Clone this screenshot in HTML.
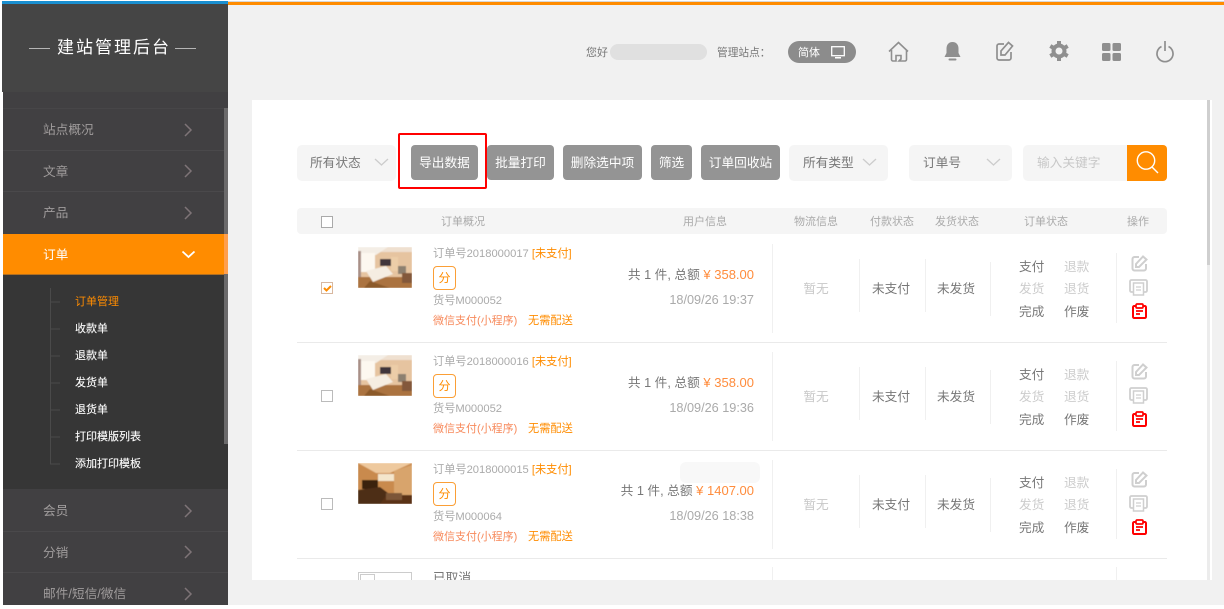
<!DOCTYPE html>
<html lang="zh-CN"><head><meta charset="utf-8"><title>订单管理</title>
<style>
*{box-sizing:border-box}
html,body{margin:0;padding:0;width:1224px;height:609px;overflow:hidden;background:#fff}
body{position:relative;font-family:"Liberation Sans","Noto Sans CJK SC",sans-serif;font-size:12.7px;color:#777}
.a{position:absolute;white-space:nowrap}
.t{position:absolute;white-space:nowrap;line-height:16px;height:16px}
.c{text-align:center}
.btn{position:absolute;top:145px;height:35px;line-height:36px;background:#949494;border-radius:4px;color:#fff;text-align:center;font-size:12.7px}
.sel{position:absolute;top:145px;height:36px;background:#f5f5f5;border-radius:5px;line-height:36px;color:#777;font-size:12.7px}
.nav{position:absolute;left:43px;color:#a09c9c;font-size:12.7px;line-height:16px;white-space:nowrap}
.sub{position:absolute;left:75px;color:#fff;font-size:11px;line-height:14px;white-space:nowrap;-webkit-text-stroke:.1px #fff}
.ln{position:absolute;left:3px;width:221px;height:1px;background:#4a494b}
.v{position:absolute;width:1px;background:#f0f0f0}
.h{position:absolute;top:214px;font-size:11px;line-height:16px;color:#aaa;white-space:nowrap}
.cb{position:absolute;left:321px;width:12px;height:12px;border:1px solid #bbb;background:#fff}
.row{position:absolute;left:0;width:1224px;height:108px}
.rl{position:absolute;left:297px;width:870px;height:1px;background:#eaeaea;top:107px}
.f{position:absolute;left:433px;top:31px;width:23px;height:24px;border:1px solid #fb9f36;border-radius:4px;color:#ff8c00;text-align:center;line-height:23px;font-size:12px}
.g{color:#aaa}.o{color:#ff8c00}
.s{font-size:11.2px}
.pay{font-size:11px;color:#f78a5c}
.pr{color:#ff8c3c;font-size:13px}
svg{position:absolute;overflow:visible}
</style></head><body>
<svg width="0" height="0" style="position:absolute"><defs>
<filter id="bl" x="0" y="0" width="100%" height="100%"><feGaussianBlur stdDeviation=".45"/></filter>
<symbol id="p1" viewBox="0 0 54 41"><g filter="url(#bl)"><rect width="54" height="41" fill="#e6c4a0"/><rect width="54" height="5" fill="#efe0d0"/><path d="M0 0h30L18 8H0z" fill="#f4eee6"/><rect x="3" y="6" width="14" height="19" fill="#fdf8f0"/><rect x="0" y="4" width="3" height="27" fill="#a88f86"/><rect y="30" width="54" height="11" fill="#ab7340"/><path d="M12 34l20 7H6z" fill="#8c5a2c"/><rect x="22" y="12" width="11" height="7" fill="#40353a"/><path d="M8 24l20-5 7 8-20 8z" fill="#f5ede2"/><path d="M33 10h7v14h-7z" fill="#eccda8"/><rect x="40" y="19" width="8" height="8" fill="#8d8070"/><rect x="44" y="26" width="10" height="10" fill="#83593a"/></g></symbol>
<symbol id="p2" viewBox="0 0 54 41"><g filter="url(#bl)"><rect width="54" height="41" fill="#c98a4e"/><path d="M0 0h54L32 10H18z" fill="#eec99e"/><rect y="30" width="54" height="11" fill="#5a3318"/><rect x="20" y="11" width="16" height="7" fill="#f4e6cc"/><rect x="4" y="17" width="16" height="9" fill="#3a2210"/><path d="M0 27l22-3 8 6-8 11H0z" fill="#4e2f18"/><path d="M36 8l18-6v30H36z" fill="#d8a46c"/><rect x="28" y="30" width="16" height="7" fill="#7c5638"/></g></symbol>
<symbol id="ed" viewBox="0 0 17 17"><path d="M8 2H3.500A2 2 0 0 0 1.500 4v9.500a2 2 0 0 0 2 2H13a2 2 0 0 0 2-2V9" fill="none" stroke="#cfcfcf" stroke-width="2"/><path d="M5 12V9l7-7.500 3.500 3L8 12z" fill="none" stroke="#cfcfcf" stroke-width="2"/></symbol>
<symbol id="pr" viewBox="0 0 19 17"><path d="M4 13H2.500a1.500 1.500 0 0 1-1.500-1.500v-9A1.500 1.500 0 0 1 2.500 1h14A1.500 1.500 0 0 1 18 2.500v9a1.500 1.500 0 0 1-1.500 1.500H15" fill="none" stroke="#cfcfcf" stroke-width="1.800"/><rect x="4.500" y="4" width="10" height="12" fill="#fff" stroke="#cfcfcf" stroke-width="1.500"/><path d="M7 8h5M7 11h5" stroke="#cfcfcf" stroke-width="1.200"/></symbol>
<symbol id="rd" viewBox="0 0 15 16"><path d="M4 3H2.200A1.200 1.200 0 0 0 1 4.200v9.600A1.200 1.200 0 0 0 2.200 15h10.600a1.200 1.200 0 0 0 1.200-1.200V4.200A1.200 1.200 0 0 0 12.800 3H11" fill="none" stroke="#f00" stroke-width="2"/><rect x="4" y="1" width="7" height="4" rx="1" fill="#fff" stroke="#f00" stroke-width="1.700"/><path d="M4 8h7M4 11h4" stroke="#f00" stroke-width="1.700"/></symbol>
</defs></svg>

<!-- page bg -->
<div class="a" style="left:3px;top:3px;width:1221px;height:602px;background:#f1f1f1"></div>
<div class="a" style="left:228px;top:1px;width:996px;height:1px;background:#d8d8d8"></div>
<div class="a" style="left:228px;top:2px;width:996px;height:3px;background:#ff8c00"></div>
<div class="a" style="left:2px;top:1px;width:226px;height:3px;background:#1a8fd0"></div>

<!-- sidebar -->
<div class="a" style="left:2px;top:4px;width:226px;height:88px;background:#454545"></div>
<div class="a" style="left:3px;top:92px;width:225px;height:513px;background:#414042"></div>
<div class="a" style="left:29px;top:48px;width:21px;height:1px;background:#b5b5b5"></div>
<div class="a" style="left:175px;top:48px;width:21px;height:1px;background:#b5b5b5"></div>
<div class="a" style="left:57px;top:38px;color:#fff;font-size:17px;line-height:20px;letter-spacing:2px">建站管理后台</div>
<div class="ln" style="top:108px;background:#474648"></div>
<div class="ln" style="top:150px"></div>
<div class="ln" style="top:191px"></div>
<div class="a" style="left:3px;top:234px;width:225px;height:40px;background:#ff8c00"></div>
<div class="a" style="left:3px;top:274px;width:225px;height:215px;background:#363636"></div>
<div class="a" style="left:3px;top:274px;width:225px;height:1px;background:#b06f22"></div>
<div class="ln" style="top:531px;width:225px"></div>
<div class="ln" style="top:572px;width:225px"></div>
<div class="a" style="left:224px;top:108px;width:4px;height:336px;background:#6b6a6b"></div>
<div class="a" style="left:224px;top:234px;width:4px;height:40px;background:#ff9f4d"></div>
<div class="nav" style="top:122px">站点概况</div>
<div class="nav" style="top:164px">文章</div>
<div class="nav" style="top:205px">产品</div>
<div class="nav" style="top:247px;color:#fff">订单</div>
<div class="nav" style="top:503px">会员</div>
<div class="nav" style="top:545px">分销</div>
<div class="nav" style="top:586px">邮件/短信/微信</div>
<svg style="left:184px;top:123px" width="8" height="14"><path d="M1 1l6 6-6 6" fill="none" stroke="#7e7477" stroke-width="1.500"/></svg>
<svg style="left:184px;top:164px" width="8" height="14"><path d="M1 1l6 6-6 6" fill="none" stroke="#7e7477" stroke-width="1.500"/></svg>
<svg style="left:184px;top:206px" width="8" height="14"><path d="M1 1l6 6-6 6" fill="none" stroke="#7e7477" stroke-width="1.500"/></svg>
<svg style="left:181px;top:250px" width="15" height="9"><path d="M1.500 1.500l6 5.500 6-5.500" fill="none" stroke="#fff" stroke-width="1.800"/></svg>
<svg style="left:184px;top:504px" width="8" height="14"><path d="M1 1l6 6-6 6" fill="none" stroke="#7e7477" stroke-width="1.500"/></svg>
<svg style="left:184px;top:545px" width="8" height="14"><path d="M1 1l6 6-6 6" fill="none" stroke="#7e7477" stroke-width="1.500"/></svg>
<svg style="left:184px;top:587px" width="8" height="14"><path d="M1 1l6 6-6 6" fill="none" stroke="#7e7477" stroke-width="1.500"/></svg>
<svg style="left:50px;top:288px" width="12" height="178"><path d="M.5 0v176M0 14h10M0 41h10M0 68h10M0 95h10M0 122h10M0 149h10M0 176h10" stroke="#4a4a4a" fill="none"/></svg>
<div class="sub o" style="top:295px;-webkit-text-stroke:0">订单管理</div>
<div class="sub" style="top:322px">收款单</div>
<div class="sub" style="top:349px">退款单</div>
<div class="sub" style="top:376px">发货单</div>
<div class="sub" style="top:403px">退货单</div>
<div class="sub" style="top:430px">打印模版列表</div>
<div class="sub" style="top:457px">添加打印模板</div>

<!-- top bar -->
<div class="a" style="left:586px;top:46px;font-size:11px;line-height:14px;color:#777">您好</div>
<div class="a" style="left:610px;top:44px;width:97px;height:16px;background:#e0e0e0;border-radius:8px"></div>
<div class="a" style="left:717px;top:46px;font-size:10.7px;line-height:14px;color:#777">管理站点：</div>
<div class="a" style="left:788px;top:41px;width:68px;height:22px;background:#8c8c8c;border-radius:11px"></div>
<div class="a" style="left:798px;top:46px;font-size:11px;line-height:14px;color:#fff">简体</div>
<svg style="left:831px;top:46px" width="14" height="13"><rect x=".7" y=".7" width="12.600" height="9" fill="none" stroke="#fff" stroke-width="1.300"/><rect x="4" y="11" width="6" height="1.500" fill="#fff"/></svg>
<svg style="left:888px;top:41px" width="21" height="21" viewBox="0 0 21 21"><path d="M1 10.500L10.500 1.500 20 10.500M3.500 9v9.500a1.500 1.500 0 0 0 1.500 1.500h3v-5.500h5v3.500l-2 2h6a1.500 1.500 0 0 0 1.500-1.500V9" fill="none" stroke="#8f8f8f" stroke-width="1.600"/></svg>
<svg style="left:942px;top:41px" width="21" height="21" viewBox="0 0 21 21"><path d="M10.500 1c-4 0-6 3-6 6.500v4.500L2.500 16h16l-2-4V7.500c0-3.500-2-6.500-6-6.500z" fill="#8f8f8f"/><path d="M7.500 18.500h6" stroke="#8f8f8f" stroke-width="2" stroke-linecap="round"/></svg>
<svg style="left:996px;top:41px" width="18" height="20" viewBox="0 0 18 20"><path d="M8 3H3a2 2 0 0 0-2 2v12a2 2 0 0 0 2 2h10a2 2 0 0 0 2-2v-6" fill="none" stroke="#8f8f8f" stroke-width="1.700"/><path d="M5 14v-4l7.500-8.500L16.500 5 9 14z" fill="none" stroke="#8f8f8f" stroke-width="1.700"/></svg>
<svg style="left:1049px;top:41px" width="20" height="20" viewBox="0 0 20 20"><circle cx="10" cy="10" r="5.500" fill="none" stroke="#8f8f8f" stroke-width="4"/><path d="M10 0v4M10 16v4M1.300 5l3.500 2M15.200 13l3.500 2M1.300 15l3.500-2M15.200 7l3.500-2" stroke="#8f8f8f" stroke-width="4"/></svg>
<svg style="left:1102px;top:43px" width="19" height="18"><rect width="8.500" height="8" rx="1.500" fill="#8f8f8f"/><rect x="10.500" width="8.500" height="8" rx="1.500" fill="#8f8f8f"/><rect y="10" width="8.500" height="8" rx="1.500" fill="#8f8f8f"/><rect x="10.500" y="10" width="8.500" height="8" rx="1.500" fill="#8f8f8f"/></svg>
<svg style="left:1155px;top:41px" width="20" height="21" viewBox="0 0 20 21"><path d="M6.500 5.500a8 8 0 1 0 7 0" fill="none" stroke="#8f8f8f" stroke-width="1.700"/><path d="M10 0v10" stroke="#8f8f8f" stroke-width="1.700"/></svg>

<!-- card -->
<div class="a" style="left:252px;top:100px;width:960px;height:480px;background:#fff;overflow:hidden"></div>
<div class="a" style="left:1207px;top:100px;width:3px;height:480px;background:#ececec"></div>
<div class="a" style="left:1207px;top:100px;width:3px;height:165px;background:#cfcfcf"></div>

<!-- toolbar -->
<div class="sel" style="left:297px;width:99px;padding-left:13px">所有状态</div>
<svg style="left:374px;top:158px" width="15" height="9"><path d="M1 1l6.500 6L14 1" fill="none" stroke="#ccc" stroke-width="1.300"/></svg>
<div class="btn" style="left:411px;width:67px">导出数据</div>
<div class="btn" style="left:487px;width:67px">批量打印</div>
<div class="btn" style="left:563px;width:79px">删除选中项</div>
<div class="btn" style="left:651px;width:41px">筛选</div>
<div class="btn" style="left:701px;width:79px">订单回收站</div>
<div class="a" style="left:398px;top:133px;width:89px;height:56px;border:2px solid #f00;border-radius:2px"></div>
<div class="sel" style="left:789px;width:99px;padding-left:14px">所有类型</div>
<svg style="left:862px;top:158px" width="15" height="9"><path d="M1 1l6.500 6L14 1" fill="none" stroke="#ccc" stroke-width="1.300"/></svg>
<div class="sel" style="left:909px;width:103px;padding-left:14px">订单号</div>
<svg style="left:986px;top:158px" width="15" height="9"><path d="M1 1l6.500 6L14 1" fill="none" stroke="#ccc" stroke-width="1.300"/></svg>
<div class="sel" style="left:1023px;width:110px;padding-left:14px;color:#c8c8c8">输入关键字</div>
<div class="a" style="left:1127px;top:145px;width:40px;height:36px;background:#ff8c00;border-radius:0 4px 4px 0"></div>
<svg style="left:1136px;top:150px" width="23" height="24"><circle cx="10" cy="10.500" r="8.700" fill="none" stroke="#fff" stroke-width="1.400"/><path d="M16 17l6 6" stroke="#fff" stroke-width="1.400"/></svg>

<!-- table head -->
<div class="a" style="left:297px;top:208px;width:870px;height:26px;background:#f5f5f5;border-radius:4px"></div>
<div class="cb" style="top:216px;border-color:#aaa"></div>
<div class="h" style="left:441px">订单概况</div>
<div class="h" style="left:683px">用户信息</div>
<div class="h" style="left:794px">物流信息</div>
<div class="h" style="left:870px">付款状态</div>
<div class="h" style="left:935px">发货状态</div>
<div class="h" style="left:1024px">订单状态</div>
<div class="h" style="left:1127px">操作</div>

<!-- row 1 -->
<div class="row" style="top:235px"><div class="rl"></div>
<div class="cb" style="top:47px;border-color:#d8b8a0"></div><svg style="left:323px;top:50px" width="9" height="7"><path d="M1 3l2.500 2.500L8 1" fill="none" stroke="#ff8c00" stroke-width="2"/></svg>
<svg style="left:358px;top:12px" width="54" height="41"><use href="#p1"/></svg>
<div class="t g s" style="left:433px;top:11px">订单号2018000017 <span class="o">[未支付]</span></div>
<div class="f">分</div>
<div class="t g s" style="left:433px;top:58px">货号M000052</div>
<div class="t pay" style="left:433px;top:78px">微信支付(小程序)</div>
<div class="t o s" style="left:528px;top:78px">无需配送</div>
<div class="t" style="right:470px;top:32px">共 1 件, 总额<span class="pr"> ¥ 358.00</span></div>
<div class="t g" style="right:470px;top:57px">18/09/26 19:37</div>
<div class="v" style="left:772px;top:9px;height:89px"></div>
<div class="t c" style="left:796px;width:40px;top:46px;color:#c8c8c8">暂无</div>
<div class="v" style="left:859px;top:24px;height:53px"></div>
<div class="t c" style="left:866px;width:50px;top:46px">未支付</div>
<div class="v" style="left:925px;top:24px;height:53px"></div>
<div class="t c" style="left:931px;width:50px;top:46px">未发货</div>
<div class="v" style="left:990px;top:27px;height:54px"></div>
<div class="t" style="left:1019px;top:24px">支付</div><div class="t" style="left:1064px;top:24px;color:#ccc">退款</div>
<div class="t" style="left:1019px;top:46px;color:#ccc">发货</div><div class="t" style="left:1064px;top:46px;color:#ccc">退货</div>
<div class="t" style="left:1019px;top:69px">完成</div><div class="t" style="left:1064px;top:69px">作废</div>
<div class="v" style="left:1116px;top:18px;height:70px"></div>
<svg style="left:1131px;top:20px" width="17" height="17"><use href="#ed"/></svg>
<svg style="left:1129px;top:44px" width="19" height="17"><use href="#pr"/></svg>
<svg style="left:1132px;top:68px" width="15" height="16"><use href="#rd"/></svg>
</div>

<!-- row 2 -->
<div class="row" style="top:343px"><div class="rl"></div>
<div class="cb" style="top:47px"></div>
<svg style="left:358px;top:12px" width="54" height="41"><use href="#p1"/></svg>
<div class="t g s" style="left:433px;top:11px">订单号2018000016 <span class="o">[未支付]</span></div>
<div class="f">分</div>
<div class="t g s" style="left:433px;top:58px">货号M000052</div>
<div class="t pay" style="left:433px;top:78px">微信支付(小程序)</div>
<div class="t o s" style="left:528px;top:78px">无需配送</div>
<div class="t" style="right:470px;top:32px">共 1 件, 总额<span class="pr"> ¥ 358.00</span></div>
<div class="t g" style="right:470px;top:57px">18/09/26 19:36</div>
<div class="v" style="left:772px;top:9px;height:89px"></div>
<div class="t c" style="left:796px;width:40px;top:46px;color:#c8c8c8">暂无</div>
<div class="v" style="left:859px;top:24px;height:53px"></div>
<div class="t c" style="left:866px;width:50px;top:46px">未支付</div>
<div class="v" style="left:925px;top:24px;height:53px"></div>
<div class="t c" style="left:931px;width:50px;top:46px">未发货</div>
<div class="v" style="left:990px;top:27px;height:54px"></div>
<div class="t" style="left:1019px;top:24px">支付</div><div class="t" style="left:1064px;top:24px;color:#ccc">退款</div>
<div class="t" style="left:1019px;top:46px;color:#ccc">发货</div><div class="t" style="left:1064px;top:46px;color:#ccc">退货</div>
<div class="t" style="left:1019px;top:69px">完成</div><div class="t" style="left:1064px;top:69px">作废</div>
<div class="v" style="left:1116px;top:18px;height:70px"></div>
<svg style="left:1131px;top:20px" width="17" height="17"><use href="#ed"/></svg>
<svg style="left:1129px;top:44px" width="19" height="17"><use href="#pr"/></svg>
<svg style="left:1132px;top:68px" width="15" height="16"><use href="#rd"/></svg>
</div>

<!-- row 3 -->
<div class="row" style="top:451px"><div class="rl"></div>
<div class="cb" style="top:47px"></div>
<svg style="left:358px;top:12px" width="54" height="41"><use href="#p2"/></svg>
<div class="t g s" style="left:433px;top:11px">订单号2018000015 <span class="o">[未支付]</span></div>
<div class="f">分</div>
<div class="t g s" style="left:433px;top:58px">货号M000064</div>
<div class="t pay" style="left:433px;top:78px">微信支付(小程序)</div>
<div class="t o s" style="left:528px;top:78px">无需配送</div>
<div class="a" style="left:680px;top:11px;width:80px;height:21px;background:#f8f8f8;border-radius:6px"></div>
<div class="t" style="right:470px;top:32px">共 1 件, 总额<span class="pr"> ¥ 1407.00</span></div>
<div class="t g" style="right:470px;top:57px">18/09/26 18:38</div>
<div class="v" style="left:772px;top:9px;height:89px"></div>
<div class="t c" style="left:796px;width:40px;top:46px;color:#c8c8c8">暂无</div>
<div class="v" style="left:859px;top:24px;height:53px"></div>
<div class="t c" style="left:866px;width:50px;top:46px">未支付</div>
<div class="v" style="left:925px;top:24px;height:53px"></div>
<div class="t c" style="left:931px;width:50px;top:46px">未发货</div>
<div class="v" style="left:990px;top:27px;height:54px"></div>
<div class="t" style="left:1019px;top:24px">支付</div><div class="t" style="left:1064px;top:24px;color:#ccc">退款</div>
<div class="t" style="left:1019px;top:46px;color:#ccc">发货</div><div class="t" style="left:1064px;top:46px;color:#ccc">退货</div>
<div class="t" style="left:1019px;top:69px">完成</div><div class="t" style="left:1064px;top:69px">作废</div>
<div class="v" style="left:1116px;top:18px;height:70px"></div>
<svg style="left:1131px;top:20px" width="17" height="17"><use href="#ed"/></svg>
<svg style="left:1129px;top:44px" width="19" height="17"><use href="#pr"/></svg>
<svg style="left:1132px;top:68px" width="15" height="16"><use href="#rd"/></svg>
</div>

<!-- row 4 clipped -->
<div class="a" style="left:252px;top:559px;width:955px;height:21px;overflow:hidden">
<div class="a" style="left:106px;top:13px;width:54px;height:30px;border:1px solid #ccc"></div>
<div class="a" style="left:108px;top:15px;width:15px;height:20px;border:1px solid #ccc"></div>
<div class="a" style="left:181px;top:11px;font-size:12.7px;line-height:16px;color:#777">已取消</div>
<div class="v" style="left:520px;top:8px;height:20px"></div>
<div class="v" style="left:864px;top:8px;height:20px"></div>
</div>
</body></html>
